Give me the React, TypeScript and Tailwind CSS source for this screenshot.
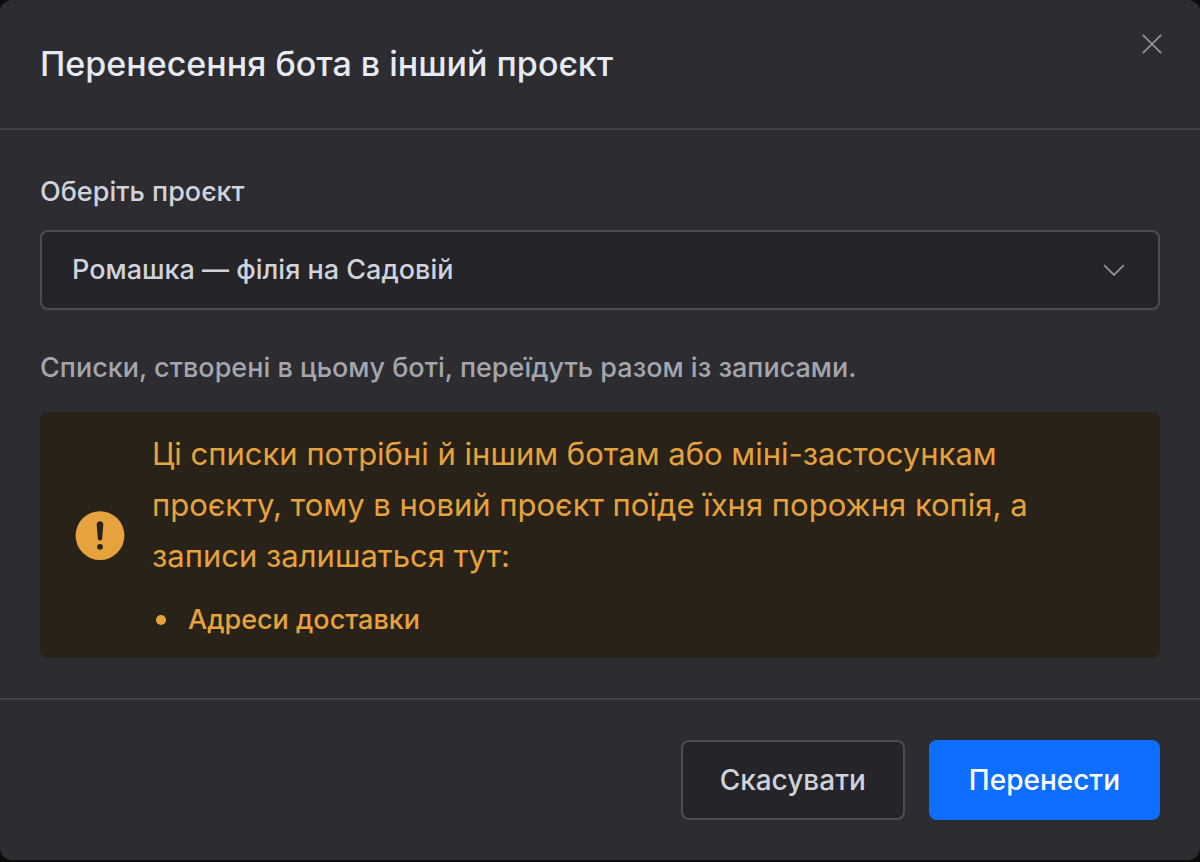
import { useState } from "react";

const projects = ["Ромашка — філія на Садовій"];
const sharedLists = ["Адреси доставки"];

function CloseIcon() {
  return (
    <svg width="20" height="20" viewBox="0 0 20 20" fill="none" aria-hidden="true">
      <path d="M0.8 0.8L19.2 19.2M19.2 0.8L0.8 19.2" stroke="#929296" strokeWidth="1.8" />
    </svg>
  );
}

function ChevronIcon() {
  return (
    <svg
      className="pointer-events-none absolute top-1/2 right-[34px] -translate-y-1/2"
      width="24"
      height="12"
      viewBox="0 0 24 12"
      fill="none"
      aria-hidden="true"
    >
      <path d="M2.2 1.2L12 11L21.8 1.2" stroke="#929296" strokeWidth="1.8" />
    </svg>
  );
}

function WarningIcon() {
  return (
    <svg className="shrink-0" width="50" height="50" viewBox="0 0 50 50" aria-hidden="true">
      <circle cx="25" cy="25.6" r="24.4" fill="#e6a23c" />
      <path
        d="M25 11.2C26.9 11.2 28.4 12.7 28.3 14.6L27.2 28.6C27.1 29.8 26.2 30.6 25 30.6C23.8 30.6 22.9 29.8 22.8 28.6L21.7 14.6C21.6 12.7 23.1 11.2 25 11.2Z"
        fill="#292218"
      />
      <circle cx="25" cy="36.8" r="2.9" fill="#292218" />
    </svg>
  );
}

export default function App() {
  const [open, setOpen] = useState(true);
  const [project, setProject] = useState(projects[0]);

  return (
    <div className="min-h-screen bg-[#0c0c0e] font-['Inter','Liberation_Sans',sans-serif]">
      {open && (
        <div
          role="dialog"
          aria-labelledby="transfer-title"
          className="rounded-xl bg-[#2d2c31] text-[27px] font-medium text-[#cfd3dc]"
        >
          <header className="flex items-start justify-between border-b-2 border-[#414243] py-10 pr-[38px] pl-10">
            <h1 id="transfer-title" className="text-[34px] leading-12 font-medium text-[#e5eaf3]">
              Перенесення бота в інший проєкт
            </h1>
            <button type="button" aria-label="Закрити" onClick={() => setOpen(false)} className="-mt-2 py-0.5">
              <CloseIcon />
            </button>
          </header>

          <div className="p-10">
            <label htmlFor="project" className="mb-4 block leading-11">
              Оберіть проєкт
            </label>
            <div className="relative">
              <select
                id="project"
                value={project}
                onChange={(e) => setProject(e.target.value)}
                className="block h-20 w-full appearance-none rounded-lg border-2 border-[#4c4d4f] bg-[#252428] px-[30px]"
              >
                {projects.map((name) => (
                  <option key={name}>{name}</option>
                ))}
              </select>
              <ChevronIcon />
            </div>

            <p className="mt-9 mb-[22px] leading-11 text-[#a3a6ad]">
              Списки, створені в цьому боті, переїдуть разом із записами.
            </p>

            <div className="flex items-center gap-[27px] rounded-lg bg-[#292218] py-4 pr-8 pl-[35px] text-[#e6a23c]">
              <WarningIcon />
              <div className="max-w-[900px]">
                <p className="text-[31px] leading-[51px] font-normal">
                  Ці списки потрібні й іншим ботам або міні-застосункам проєкту, тому в новий проєкт поїде їхня
                  порожня копія, а записи залишаться тут:
                </p>
                <ul className="mt-[17px] leading-11">
                  {sharedLists.map((list) => (
                    <li key={list} className="flex items-center gap-[22px] pl-1">
                      <span className="size-2.5 rounded-full bg-current" />
                      {list}
                    </li>
                  ))}
                </ul>
              </div>
            </div>
          </div>

          <footer className="flex justify-end gap-6 border-t-2 border-[#414243] p-10 text-[28px]">
            <button
              type="button"
              onClick={() => setOpen(false)}
              className="h-20 rounded-lg border-2 border-[#4c4d4f] bg-[#252428] px-[37px]"
            >
              Скасувати
            </button>
            <button type="button" className="h-20 rounded-lg bg-[#0d6eff] px-10 text-white">
              Перенести
            </button>
          </footer>
        </div>
      )}
    </div>
  );
}
